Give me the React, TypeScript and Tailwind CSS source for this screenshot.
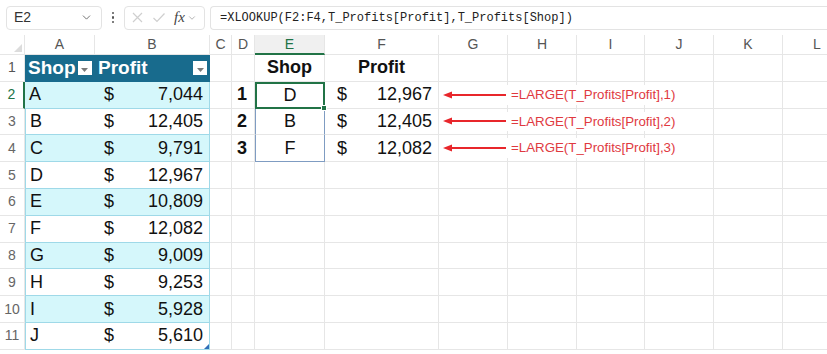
import { ChevronDown } from 'lucide-react'

const cols = ['A', 'B', 'C', 'D', 'E', 'F', 'G', 'H', 'I', 'J', 'K', 'L']

const shops = [
  { shop: 'A', profit: '7,044' },
  { shop: 'B', profit: '12,405' },
  { shop: 'C', profit: '9,791' },
  { shop: 'D', profit: '12,967' },
  { shop: 'E', profit: '10,809' },
  { shop: 'F', profit: '12,082' },
  { shop: 'G', profit: '9,009' },
  { shop: 'H', profit: '9,253' },
  { shop: 'I', profit: '5,928' },
  { shop: 'J', profit: '5,610' },
]

const top3 = [
  { rank: '1', shop: 'D', profit: '12,967' },
  { rank: '2', shop: 'B', profit: '12,405' },
  { rank: '3', shop: 'F', profit: '12,082' },
]

const grid = 'border-r border-b border-[#e6e6e6]'

function FilterButton() {
  return (
    <span className="flex h-[14px] w-[14px] items-end justify-center bg-white pb-[3px]">
      <svg width="7" height="4" viewBox="0 0 7 4">
        <polygon points="0,0 7,0 3.5,4" fill="#7a7a7a" />
      </svg>
    </span>
  )
}

function Arrow() {
  return (
    <svg width="63" height="10" viewBox="0 0 63 10" className="shrink-0">
      <line x1="6" y1="5" x2="63" y2="5" stroke="#e8262b" strokeWidth="2" />
      <polygon points="0,5 9,1.5 9,8.5" fill="#e8262b" />
    </svg>
  )
}

function FormulaBar() {
  return (
    <div className="flex h-[35px] items-center gap-[5px] bg-white pl-[6px] text-[#333]" style={{ fontFamily: '"Liberation Sans", Arial, sans-serif' }}>
      <div className="flex h-[24px] w-[96px] items-center justify-between rounded-[4px] border border-[#e3e3e3] pl-[7px] pr-[8px] text-[14px]">
        <span>E2</span>
        <ChevronDown size={13} strokeWidth={1.5} className="text-[#555]" />
      </div>
      <div className="flex w-[12px] flex-col items-center gap-[2px]">
        <span className="h-[2.5px] w-[2.5px] rounded-full bg-[#555]" />
        <span className="h-[2.5px] w-[2.5px] rounded-full bg-[#555]" />
        <span className="h-[2.5px] w-[2.5px] rounded-full bg-[#555]" />
      </div>
      <div className="flex h-[24px] w-[81px] items-center gap-[8px] rounded-[4px] border border-[#e3e3e3] pl-[6px]">
        <svg width="13" height="13" viewBox="0 0 13 13">
          <path d="M2 2 L11 11 M11 2 L2 11" stroke="#cfcfcf" strokeWidth="1.2" />
        </svg>
        <svg width="14" height="13" viewBox="0 0 14 13">
          <path d="M1.5 7 L5 10.5 L12.5 2.5" stroke="#cfcfcf" strokeWidth="1.2" fill="none" />
        </svg>
        <span className="text-[15px] italic text-[#444]" style={{ fontFamily: '"Liberation Serif", serif' }}>
          fx
        </span>
        <ChevronDown size={10} strokeWidth={1.5} className="-ml-[6px] text-[#888]" />
      </div>
      <div className="flex h-[24px] flex-1 items-center rounded-l-[4px] border border-r-0 border-[#e3e3e3] pl-[9px] text-[12px] text-[#222]" style={{ fontFamily: '"Liberation Mono", monospace' }}>
        =XLOOKUP(F2:F4,T_Profits[Profit],T_Profits[Shop])
      </div>
    </div>
  )
}

export default function App() {
  return (
    <div className="h-[354px] w-[827px] overflow-hidden bg-white" style={{ fontFamily: '"Liberation Sans", Arial, sans-serif' }}>
      <FormulaBar />

      <div className="grid grid-cols-[25px_70px_115px_22px_23px_70px_114px_69px_69px_68px_69px_69px_69px] grid-rows-[20px_repeat(12,26.8px)]">
        {/* column headers */}
        <div className={`${grid} relative`}>
          <svg width="8" height="8" viewBox="0 0 8 8" className="absolute bottom-[2px] right-[2px]">
            <polygon points="8,0 8,8 0,8" fill="#dcdcdc" />
          </svg>
        </div>
        {cols.map((c) =>
          c === 'E' ? (
            <div key={c} className="flex items-center justify-center border-r border-b-2 border-r-[#e6e6e6] border-b-[#217346] bg-[#f0f0f0] text-[14px] text-[#217346]">
              {c}
            </div>
          ) : (
            <div key={c} className={`${grid} flex items-center justify-center text-[14px] text-[#555]`}>
              {c}
            </div>
          )
        )}

        {/* row 1 */}
        <div className={`${grid} flex items-center justify-center text-[14px] text-[#555]`}>1</div>
        <div className="flex items-center gap-[2px] bg-[#186b8d] pl-[3px] text-[19px] font-bold text-white">
          <span>Shop</span>
          <FilterButton />
        </div>
        <div className="flex items-center justify-between bg-[#186b8d] pl-[3px] pr-[3px] text-[19px] font-bold text-white">
          <span>Profit</span>
          <FilterButton />
        </div>
        <div className={grid} />
        <div className={grid} />
        <div className={`${grid} flex items-center justify-center text-[18px] font-bold text-[#111]`}>Shop</div>
        <div className={`${grid} flex items-center justify-center text-[18px] font-bold text-[#111]`}>Profit</div>
        {cols.slice(6).map((c) => (
          <div key={c} className={grid} />
        ))}

        {/* data rows */}
        {shops.map((s, i) => {
          const band = i % 2 === 0 ? 'bg-[#d5f7fb]' : 'bg-white'
          const last = i === shops.length - 1
          const t = i < 3 ? top3[i] : null
          return [
            <div
              key={`h${i}`}
              className={`flex items-center justify-center border-b border-[#e6e6e6] text-[14px] ${
                i === 0 ? 'border-r-2 border-r-[#217346] text-[#217346]' : 'border-r border-r-[#e6e6e6] text-[#666]'
              }`}
            >
              {i + 2}
            </div>,
            <div key={`a${i}`} className={`${band} flex items-center border-b border-[#9fd9e8] pl-[4px] text-[18px] text-[#111] ${i === 0 ? '' : 'border-l border-l-[#9fd9e8]'}`}>
              {s.shop}
            </div>,
            <div key={`b${i}`} className={`${band} relative flex items-center justify-between border-r border-b border-[#9fd9e8] pl-[9px] pr-[6px] text-[18px] text-[#111]`}>
              <span>$</span>
              <span>{s.profit}</span>
              {last && (
                <svg width="5" height="5" viewBox="0 0 5 5" className="absolute bottom-0 right-0">
                  <polygon points="5,0 5,5 0,5" fill="#2f6fb8" />
                </svg>
              )}
            </div>,
            <div key={`c${i}`} className={grid} />,
            <div key={`d${i}`} className={`${grid} flex items-center justify-end pr-[7px] text-[18px] font-bold text-[#111]`}>
              {t?.rank}
            </div>,
            t ? (
              <div
                key={`e${i}`}
                className={`relative flex items-center justify-center text-[18px] text-[#111] ${
                  i === 0 ? 'border-2 border-[#217346]' : `border-r border-l border-[#7f9cc2] ${i === 2 ? 'border-b' : 'border-b border-b-[#e6e6e6]'}`
                }`}
              >
                {t.shop}
                {i === 0 && <span className="absolute -bottom-[4px] -right-[4px] z-10 h-[6px] w-[6px] border border-white bg-[#217346]" />}
              </div>
            ) : (
              <div key={`e${i}`} className={grid} />
            ),
            <div key={`f${i}`} className={`${grid} flex items-center justify-between pl-[12px] pr-[6px] text-[18px] text-[#111]`}>
              {t && (
                <>
                  <span>$</span>
                  <span>{t.profit}</span>
                </>
              )}
            </div>,
            t ? (
              <div key={`g${i}`} className={`${grid} relative z-10 flex items-center overflow-visible whitespace-nowrap pl-[4px]`}>
                <Arrow />
                <span className="bg-white pl-[5px] pr-[2px] text-[13.3px] text-[#e0393f]">=LARGE(T_Profits[Profit],{t.rank})</span>
              </div>
            ) : (
              <div key={`g${i}`} className={grid} />
            ),
            ...cols.slice(7).map((c) => <div key={`${c}${i}`} className={grid} />),
          ]
        })}
      </div>
    </div>
  )
}
